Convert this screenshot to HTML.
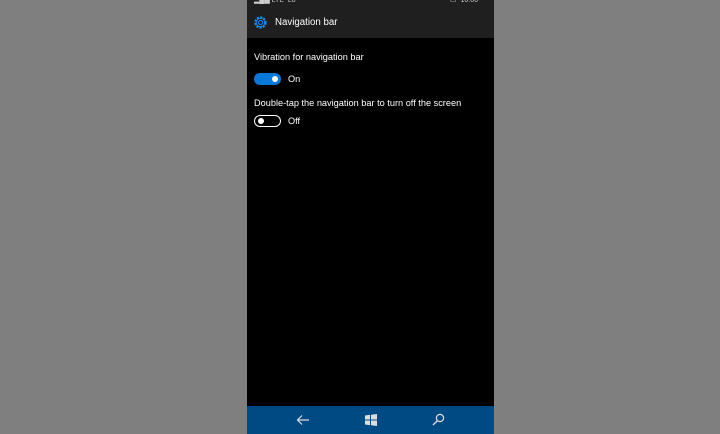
<!DOCTYPE html><html><head><style>
body{margin:0;width:720px;height:434px;background:#7f7f7f;position:relative;overflow:hidden;font-family:"Liberation Sans",sans-serif}
.ph{position:absolute;left:247px;top:0;width:247px;height:434px;background:#000}
.hd{position:absolute;left:0;top:0;width:247px;height:38px;background:#1f1f1f}
.t{position:absolute;color:#fff;font-size:9.2px;white-space:nowrap}
.nav{position:absolute;left:0;top:406px;width:247px;height:28px;background:#004a84}
</style></head><body><div class="ph">
<div class="hd">
<div class="t" style="left:7px;top:-4px;font-size:7px;color:#ccc">▂▄▆ LTE &nbsp;Lo</div>
<div class="t" style="left:203px;top:-4px;font-size:7px;color:#ccc">▭ &nbsp;10:06</div>
<svg style="position:absolute;left:6px;top:15px" width="15" height="15" viewBox="0 0 15 15"><circle cx="7.5" cy="7.5" r="5.3" fill="none" stroke="#1e90ff" stroke-width="1.6" stroke-dasharray="2.2 1.3"/><circle cx="7.5" cy="7.5" r="4.2" fill="none" stroke="#1e90ff" stroke-width="0.8"/><circle cx="7.5" cy="7.5" r="2" fill="none" stroke="#1e90ff" stroke-width="1"/></svg>
<div class="t" style="left:28px;top:17px;font-size:9.7px">Navigation bar</div>
</div>
<div class="t" style="left:7px;top:52px">Vibration for navigation bar</div>
<div style="position:absolute;left:7px;top:73px;width:27px;height:12px;border-radius:6px;background:#0a78d7"></div>
<div style="position:absolute;left:25px;top:76px;width:6px;height:6px;border-radius:3px;background:#fff"></div>
<div class="t" style="left:41px;top:74px">On</div>
<div class="t" style="left:7px;top:98px">Double-tap the navigation bar to turn off the screen</div>
<div style="position:absolute;left:7px;top:115px;width:24.6px;height:9.6px;border-radius:6px;border:1.2px solid #fff"></div>
<div style="position:absolute;left:11px;top:118px;width:6px;height:6px;border-radius:3px;background:#fff"></div>
<div class="t" style="left:41px;top:116px">Off</div>
<div class="nav">
<svg style="position:absolute;left:49px;top:8px" width="14" height="12"><path d="M13 6H2M6 1.5L1.5 6L6 10.5" fill="none" stroke="#ddd" stroke-width="1.2"/></svg>
<svg style="position:absolute;left:118px;top:8px" width="12" height="12"><path d="M0 1.5L5 0.8V5.5H0ZM6 0.7L12 0V5.5H6ZM0 6.5H5V11.2L0 10.5ZM6 6.5H12V12L6 11.3Z" fill="#ddd"/></svg>
<svg style="position:absolute;left:185px;top:7px" width="13" height="13"><circle cx="8" cy="5" r="3.6" fill="none" stroke="#ddd" stroke-width="1.2"/><path d="M5.5 7.5L1 12" stroke="#ddd" stroke-width="1.3"/></svg>
</div></div></body></html>
